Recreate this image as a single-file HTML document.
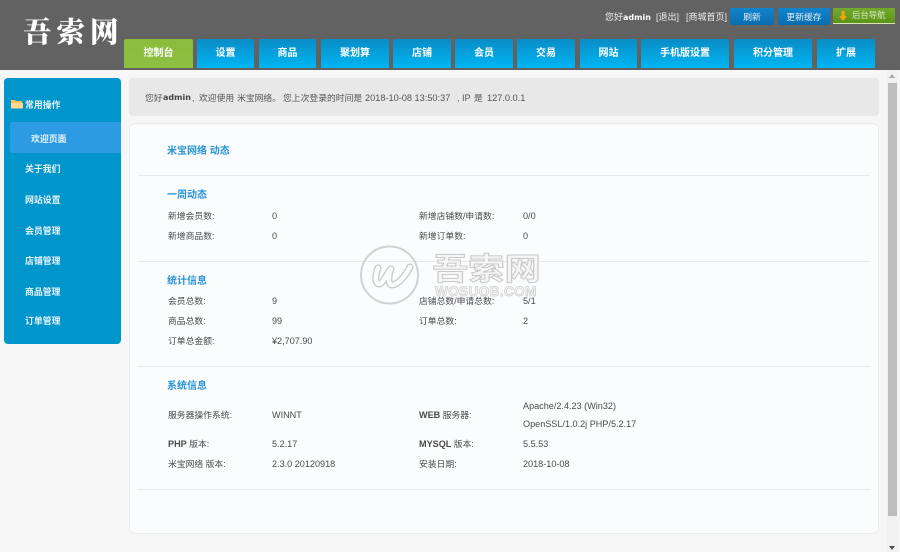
<!DOCTYPE html>
<html><head><meta charset="utf-8">
<style>
html,body{margin:0;padding:0;width:900px;height:552px;overflow:hidden;background:#f6f6f6;font-family:"Liberation Sans","Noto Sans CJK SC",sans-serif;}
#w{position:absolute;left:0;top:0;width:900px;height:552px;overflow:hidden;background:#f6f6f6;filter:blur(0.35px);}
.a{position:absolute;white-space:nowrap;}
#hd{position:absolute;left:0;top:0;width:900px;height:70px;background:#626262;}
.nav{position:absolute;top:39px;height:29px;line-height:30px;text-align:center;color:#fff;font-size:10px;font-weight:bold;border-radius:2px 2px 0 0;background:linear-gradient(#0a8cc6,#00b6f2);}
.nav.g{background:linear-gradient(#8cbc3c,#8ebf42);}
.tb{position:absolute;top:8px;height:17px;line-height:18px;text-align:center;color:#e2eef8;font-size:8.8px;background:linear-gradient(#1184cc,#0a6cae);}
.side{position:absolute;left:4px;top:78px;width:117px;height:266px;background:#0095cb;border-radius:4px;}
.si{position:absolute;left:21px;color:#e8f4fa;font-size:8.9px;font-weight:bold;height:14px;line-height:14px;white-space:nowrap;}
.t{position:absolute;font-size:9.1px;color:#4a4a4a;white-space:nowrap;line-height:14px;}
.c{font-size:8.8px;}
.h{position:absolute;left:167px;font-size:10px;font-weight:bold;color:#2a94d6;line-height:14px;white-space:nowrap;margin-top:2px;}
.ln{position:absolute;left:138px;width:732px;height:1px;background:#e6e8ea;}
.top{position:absolute;top:10px;font-size:9px;line-height:14px;color:#eee;white-space:nowrap;}
.wl{position:absolute;top:90px;font-size:8.8px;line-height:14px;color:#555;white-space:nowrap;margin-top:0.500px;}
</style></head><body><div id="w">
<div id="hd"></div>
<div class="a" style="left:23px;top:13px;font-family:'Noto Serif CJK SC','Liberation Serif',serif;font-weight:900;font-size:28.5px;line-height:36px;letter-spacing:5px;color:#fff">吾索网</div>
<div class="nav g" style="left:124px;width:69px">控制台</div>
<div class="nav" style="left:197px;width:57px">设置</div>
<div class="nav" style="left:259px;width:57px">商品</div>
<div class="nav" style="left:321px;width:68px">聚划算</div>
<div class="nav" style="left:393px;width:58px">店铺</div>
<div class="nav" style="left:455px;width:58px">会员</div>
<div class="nav" style="left:517px;width:58px">交易</div>
<div class="nav" style="left:580px;width:57px">网站</div>
<div class="nav" style="left:641px;width:88px">手机版设置</div>
<div class="nav" style="left:734px;width:78px">积分管理</div>
<div class="nav" style="left:817px;width:58px">扩展</div>
<div class="top" style="left:605px">您好<b style="font-family:'DejaVu Sans',sans-serif;font-size:8px;color:#fff">admin</b></div>
<div class="top" style="left:656px">[退出]</div>
<div class="top" style="left:686px">[商城首页]</div>
<div class="tb" style="left:730px;width:44px">刷新</div>
<div class="tb" style="left:778px;width:52px">更新缓存</div>
<div class="tb" style="left:833px;width:62px;height:15px;line-height:15px;background:linear-gradient(#74a82e,#5c9418);color:#dcebc4;font-size:8.4px;text-align:left;text-indent:19px;border-bottom:1px solid #d8e4b8;">后台导航</div>
<svg class="a" style="left:838px;top:11px" width="10" height="11" viewBox="0 0 10 11"><path d="M3.500 0h3v5h2.500L5 10 1 5h2.500z" fill="#f2a41c"/></svg>

<div class="side"></div>
<svg class="a" style="left:11px;top:99px" width="12" height="10" viewBox="0 0 12 10"><path d="M0 1h4l1 1h6v7H0z" fill="#f6c25a"/><path d="M0 4h12v5.500H0z" fill="#fbd98e"/></svg>
<div class="si" style="left:25px;top:98px">常用操作</div>
<div class="a" style="left:10px;top:122px;width:111px;height:31px;background:#2c9be2;border-radius:2px 0 0 2px"></div>
<div class="si" style="left:31px;top:132px">欢迎页面</div>
<div class="si" style="left:25px;top:162px">关于我们</div>
<div class="si" style="left:25px;top:193px">网站设置</div>
<div class="si" style="left:25px;top:224px">会员管理</div>
<div class="si" style="left:25px;top:254px">店铺管理</div>
<div class="si" style="left:25px;top:285px">商品管理</div>
<div class="si" style="left:25px;top:314px">订单管理</div>

<div class="a" style="left:129px;top:78px;width:750px;height:38px;background:#e8e8e8;border-radius:4px"></div>
<div class="wl" style="left:145px">您好</div>
<div class="wl" style="left:163px;font-family:'DejaVu Sans',sans-serif;font-size:8px;font-weight:bold;color:#444">admin</div>
<div class="wl" style="left:192px">,</div>
<div class="wl" style="left:199px">欢迎使用</div>
<div class="wl" style="left:237px">米宝网络。</div>
<div class="wl" style="left:283px">您上次登录的时间是</div>
<div class="wl" style="left:365px;font-size:9.2px">2018-10-08 13:50:37</div>
<div class="wl" style="left:457px">,</div>
<div class="wl" style="left:462px;font-size:9.2px">IP</div>
<div class="wl" style="left:474px">是</div>
<div class="wl" style="left:487px;font-size:9.2px">127.0.0.1</div>

<div class="a" style="left:129px;top:123px;width:748px;height:409px;background:#fbfcfe;border:1px solid #ebebeb;border-radius:6px"></div>

<div class="ln" style="top:175px"></div>
<div class="ln" style="top:261px"></div>
<div class="ln" style="top:366px"></div>
<div class="ln" style="top:489px"></div>

<svg class="a" style="left:360px;top:245px" width="62" height="62" viewBox="0 0 62 62" fill="none"><circle cx="29.500" cy="30" r="28.500" stroke="#d2d2d2" stroke-width="2"/><path d="M18 23C15 30 15 39 19 39C23 39 27 28 31 24C28 31 28 40 32 40C38 40 46 30 50 22" stroke="#c8c8c8" stroke-width="7" stroke-linecap="round" stroke-linejoin="round"/><path d="M18 23C15 30 15 39 19 39C23 39 27 28 31 24C28 31 28 40 32 40C38 40 46 30 50 22" stroke="#fbfcfe" stroke-width="4.500" stroke-linecap="round" stroke-linejoin="round"/></svg>
<div class="a" style="left:432px;top:247px;font-family:'Noto Sans CJK SC',sans-serif;font-weight:700;font-size:31px;line-height:40px;color:#f6f6f6;-webkit-text-stroke:1px #c8c8c8;transform:scaleX(1.17);transform-origin:left center;">吾索网</div>
<div class="a" style="left:435px;top:284px;font-size:13.800px;line-height:15px;font-weight:bold;letter-spacing:0.200px;color:#f6f6f6;-webkit-text-stroke:0.700px #cccccc;">WOSUOB.COM</div>

<div class="h" style="top:143px">米宝网络 动态</div>
<div class="h" style="top:187px">一周动态</div>
<div class="t c" style="left:168px;top:209px">新增会员数:</div><div class="t" style="left:272px;top:209px">0</div>
<div class="t c" style="left:419px;top:209px">新增店铺数/申请数:</div><div class="t" style="left:523px;top:209px">0/0</div>
<div class="t c" style="left:168px;top:229px">新增商品数:</div><div class="t" style="left:272px;top:229px">0</div>
<div class="t c" style="left:419px;top:229px">新增订单数:</div><div class="t" style="left:523px;top:229px">0</div>
<div class="h" style="top:273px">统计信息</div>
<div class="t c" style="left:168px;top:294px">会员总数:</div><div class="t" style="left:272px;top:294px">9</div>
<div class="t c" style="left:419px;top:294px">店铺总数/申请总数:</div><div class="t" style="left:523px;top:294px">5/1</div>
<div class="t c" style="left:168px;top:314px">商品总数:</div><div class="t" style="left:272px;top:314px">99</div>
<div class="t c" style="left:419px;top:314px">订单总数:</div><div class="t" style="left:523px;top:314px">2</div>
<div class="t c" style="left:168px;top:334px">订单总金额:</div><div class="t" style="left:272px;top:334px">¥2,707.90</div>
<div class="h" style="top:378px">系统信息</div>
<div class="t c" style="left:168px;top:408px">服务器操作系统:</div><div class="t" style="left:272px;top:408px">WINNT</div>
<div class="t c" style="left:419px;top:408px"><b style="font-size:9.1px">WEB</b> 服务器:</div>
<div class="t" style="left:523px;top:399px">Apache/2.4.23 (Win32)</div>
<div class="t" style="left:523px;top:417px">OpenSSL/1.0.2j PHP/5.2.17</div>
<div class="t c" style="left:168px;top:437px"><b style="font-size:9.1px">PHP</b> 版本:</div><div class="t" style="left:272px;top:437px">5.2.17</div>
<div class="t c" style="left:419px;top:437px"><b style="font-size:9.1px">MYSQL</b> 版本:</div><div class="t" style="left:523px;top:437px">5.5.53</div>
<div class="t c" style="left:168px;top:457px">米宝网络 版本:</div><div class="t" style="left:272px;top:457px">2.3.0 20120918</div>
<div class="t c" style="left:419px;top:457px">安装日期:</div><div class="t" style="left:523px;top:457px">2018-10-08</div>

<div class="a" style="left:887px;top:70px;width:11px;height:482px;background:#f1f1f1"></div>
<div class="a" style="left:888px;top:83px;width:9px;height:433px;background:#bdbdbd"></div>
<div class="a" style="left:889px;top:74px;border:3.500px solid transparent;border-top:0;border-bottom:4px solid #a8a8a8"></div>
<div class="a" style="left:889px;top:546px;border:3.500px solid transparent;border-bottom:0;border-top:4px solid #505050"></div>
</div></body></html>
